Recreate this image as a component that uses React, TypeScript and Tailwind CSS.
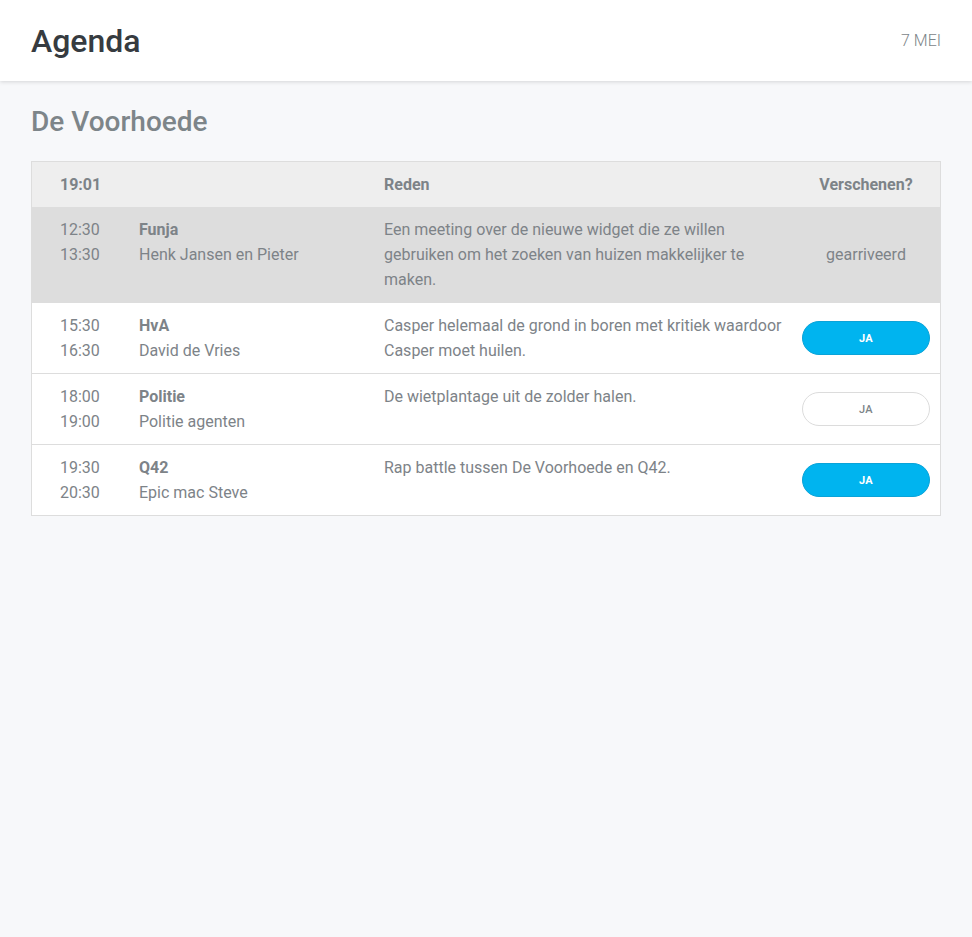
import React from "react";

interface Meeting {
  start: string;
  end: string;
  org: string;
  who: string;
  reason: string;
  status: "arrived" | "yes" | "open";
}

const meetings: Meeting[] = [
  {
    start: "12:30",
    end: "13:30",
    org: "Funja",
    who: "Henk Jansen en Pieter",
    reason: "Een meeting over de nieuwe widget die ze willen gebruiken om het zoeken van huizen makkelijker te maken.",
    status: "arrived",
  },
  {
    start: "15:30",
    end: "16:30",
    org: "HvA",
    who: "David de Vries",
    reason: "Casper helemaal de grond in boren met kritiek waardoor Casper moet huilen.",
    status: "yes",
  },
  {
    start: "18:00",
    end: "19:00",
    org: "Politie",
    who: "Politie agenten",
    reason: "De wietplantage uit de zolder halen.",
    status: "open",
  },
  {
    start: "19:30",
    end: "20:30",
    org: "Q42",
    who: "Epic mac Steve",
    reason: "Rap battle tussen De Voorhoede en Q42.",
    status: "yes",
  },
];

const COLS = "grid grid-cols-[107px_245px_408px_1fr]";

function StatusCell({ status }: { status: Meeting["status"] }) {
  if (status === "arrived") {
    return <span>gearriveerd</span>;
  }
  const on = status === "yes";
  return (
    <button
      className={`flex h-[34px] w-[128px] items-center justify-center rounded-full border text-[11px] font-bold tracking-wide ${
        on ? "border-[#0aa3d8] bg-[#00b4ef] text-white" : "border-[#dcdcdc] bg-white font-medium text-[#7d8589]"
      }`}
    >
      JA
    </button>
  );
}

export default function App() {
  return (
    <div className="min-h-[937px] bg-[#f7f8fa] font-['Roboto',sans-serif] text-[#7d8388]">
      <header className="flex h-[81px] items-center justify-between bg-white px-[31px] shadow-[0_1px_4px_rgba(0,0,0,0.14)]">
        <h1 className="text-[32px] font-medium leading-none text-[#363b40]">Agenda</h1>
        <span className="text-[16px] font-light text-[#7d8589]">7 MEI</span>
      </header>

      <main className="px-[31px]">
        <h2 className="pb-[23px] pt-[25px] text-[28px] font-medium leading-[32px] text-[#7d8589]">De Voorhoede</h2>

        <div className="border border-[#dddddd] bg-white text-[16px] leading-[25px]">
          <div className={`${COLS} bg-[#eeeeee] py-[10px] font-bold`}>
            <div className="pl-[28px]">19:01</div>
            <div />
            <div>Reden</div>
            <div className="text-center">Verschenen?</div>
          </div>

          {meetings.map((m, i) => (
            <div
              key={m.org}
              className={`${COLS} py-[10px] ${m.status === "arrived" ? "bg-[#dddddd]" : "bg-white"} ${
                i > 0 ? "border-t border-[#dddddd]" : ""
              }`}
            >
              <div className="pl-[28px]">
                <div>{m.start}</div>
                <div>{m.end}</div>
              </div>
              <div>
                <div className="font-bold">{m.org}</div>
                <div>{m.who}</div>
              </div>
              <div className="pr-[8px]">{m.reason}</div>
              <div className="flex items-center justify-center">
                <StatusCell status={m.status} />
              </div>
            </div>
          ))}
        </div>
      </main>
    </div>
  );
}
